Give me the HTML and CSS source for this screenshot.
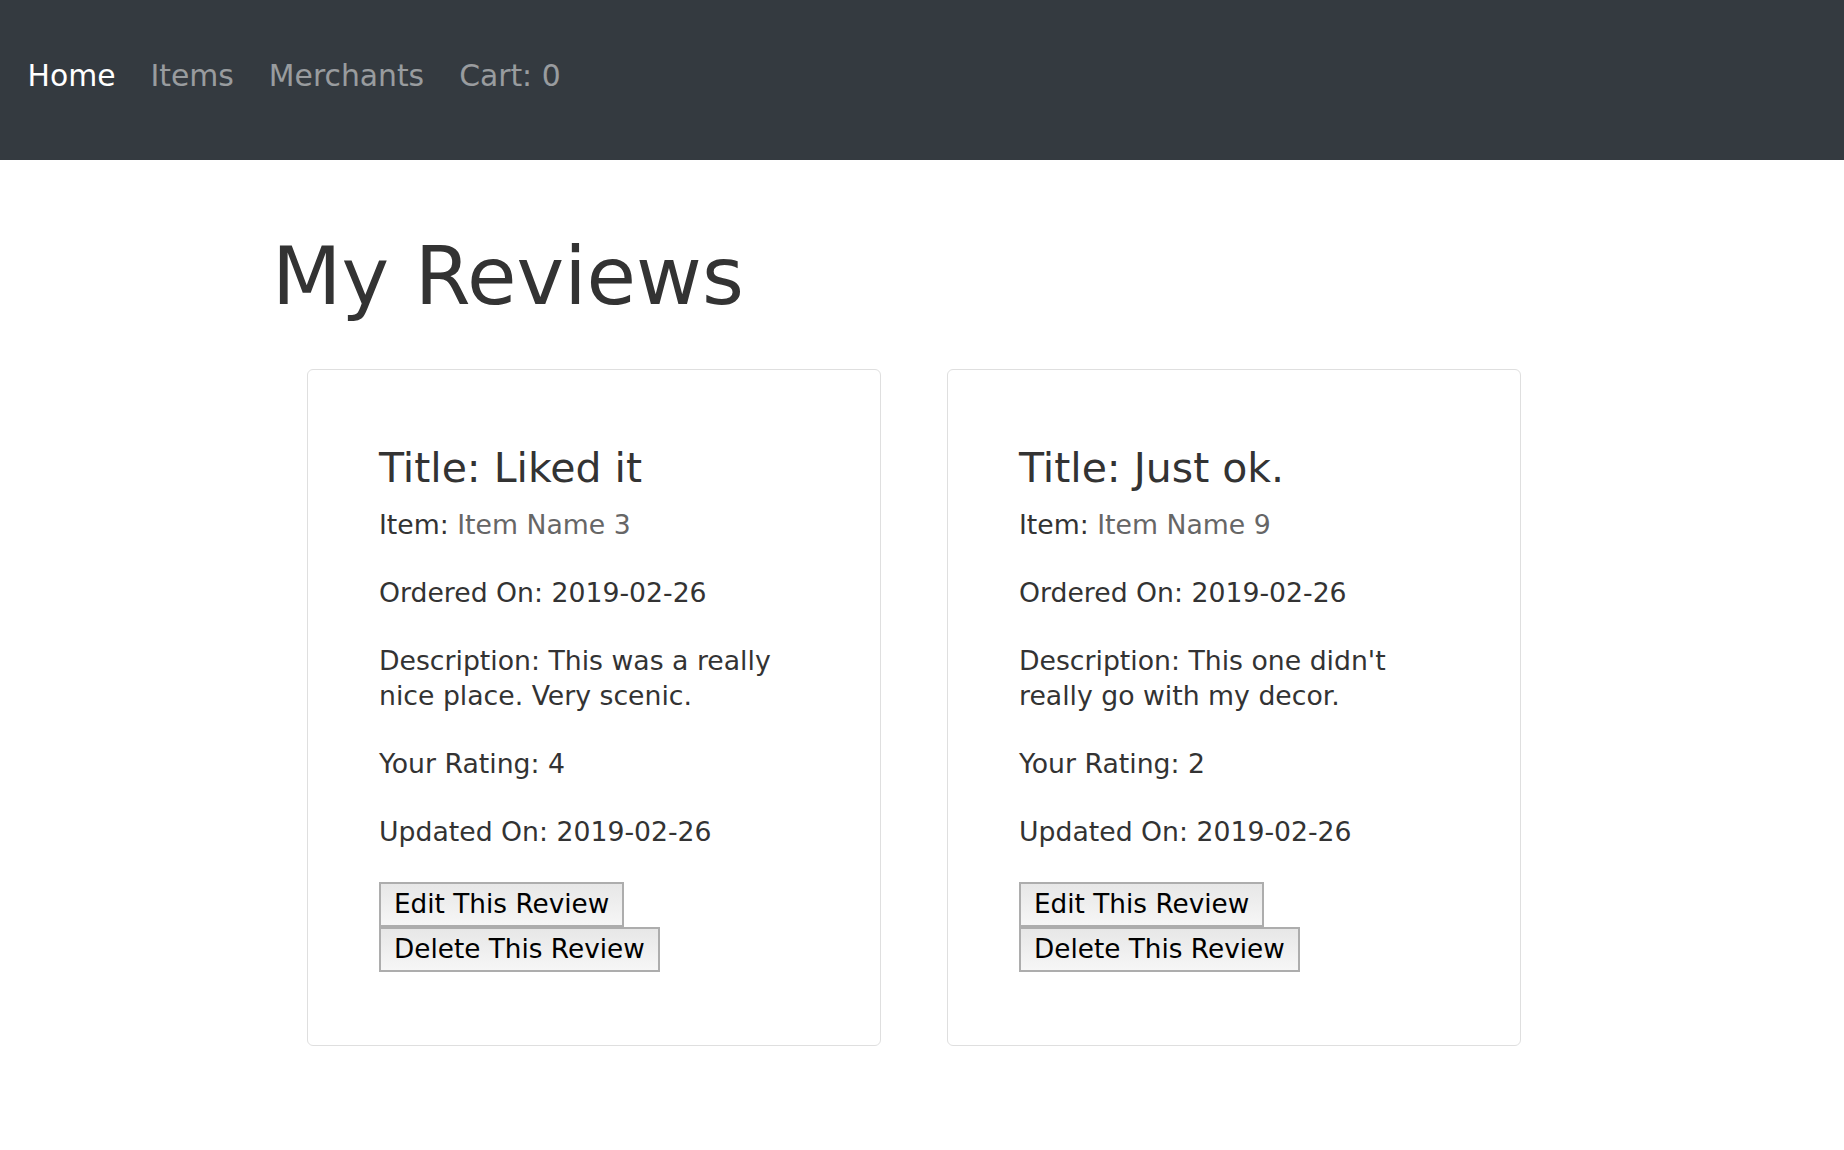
FILE: index.html
```html
<!DOCTYPE html>
<html lang="en">
<head>
<meta charset="utf-8">
<title>My Reviews</title>
<link rel="stylesheet" href="styles.css">
</head>
<body>
<nav class="navbar">
  <a class="nav-link active" href="#">Home</a>
  <a class="nav-link" href="#">Items</a>
  <a class="nav-link" href="#">Merchants</a>
  <a class="nav-link" href="#">Cart: 0</a>
</nav>
<main class="container">
  <h1 class="page-title">My Reviews</h1>
  <section class="reviews">
    <article class="card">
      <h3 class="card-title">Title: Liked it</h3>
      <p>Item: <a class="item-link" href="#">Item Name 3</a></p>
      <p>Ordered On: 2019-02-26</p>
      <p>Description: This was a really nice place. Very scenic.</p>
      <p>Your Rating: 4</p>
      <p>Updated On: 2019-02-26</p>
      <div class="actions">
        <button class="btn" type="button">Edit This Review</button>
        <button class="btn" type="button">Delete This Review</button>
      </div>
    </article>
    <article class="card">
      <h3 class="card-title">Title: Just ok.</h3>
      <p>Item: <a class="item-link" href="#">Item Name 9</a></p>
      <p>Ordered On: 2019-02-26</p>
      <p>Description: This one didn't really go with my decor.</p>
      <p>Your Rating: 2</p>
      <p>Updated On: 2019-02-26</p>
      <div class="actions">
        <button class="btn" type="button">Edit This Review</button>
        <button class="btn" type="button">Delete This Review</button>
      </div>
    </article>
  </section>
</main>
</body>
</html>
```
FILE: styles.css
```css
html, body {
  margin: 0;
  padding: 0;
}
body {
  font-family: "DejaVu Sans", Verdana, sans-serif;
  color: #333;
  background: #fff;
  font-size: 26.7px;
  line-height: 35px;
}
.navbar {
  box-sizing: border-box;
  height: 160px;
  background: #343a40;
  display: flex;
  align-items: flex-start;
  padding: 54px 0 0 10px;
}
.nav-link {
  font-size: 29.8px;
  line-height: 44px;
  padding: 0 17.5px;
  color: rgba(255, 255, 255, 0.5);
  text-decoration: none;
}
.nav-link.active {
  color: #fff;
}
.container {
  width: 1300px;
  margin: 0 auto;
}
.page-title {
  font-size: 80.5px;
  line-height: 96px;
  font-weight: normal;
  margin: 68px 0 45px;
}
.reviews {
  display: flex;
  gap: 66px;
  padding-left: 35px;
}
.card {
  box-sizing: border-box;
  width: 574px;
  border: 1px solid #dfdfdf;
  border-radius: 6px;
  padding: 74px 70px 73px 71px;
}
.card-title {
  font-size: 41px;
  line-height: 48px;
  font-weight: normal;
  margin: 0 0 15px;
}
.card p {
  margin: 0 0 33px;
}
.item-link {
  color: #666;
  text-decoration: none;
}
.actions {
  display: flex;
  flex-direction: column;
  align-items: flex-start;
}
.btn {
  font-family: "DejaVu Sans", Verdana, sans-serif;
  font-size: 26.3px;
  line-height: 31px;
  color: #000;
  background: linear-gradient(#e7e7e7, #f6f6f6);
  border: 2px solid #adadad;
  border-radius: 0;
  padding: 5px 13px;
  margin: 0;
}
```
